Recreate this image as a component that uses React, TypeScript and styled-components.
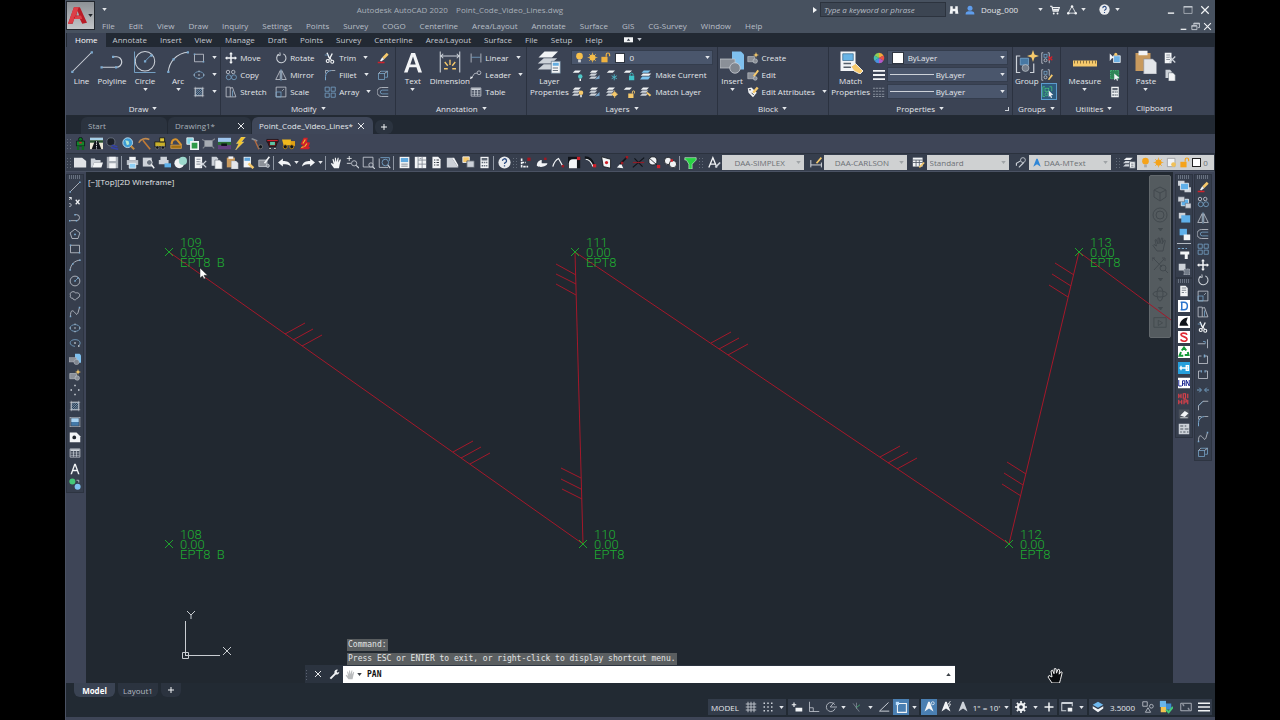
import React from "react";
import styled, { createGlobalStyle, css } from "styled-components";

const g = "#cdd2d9";
const w = "#f2f4f6";
const b = "#7aa9cf";
const y = "#f6c96b";
const r = "#d0202a";
const gr = "#46c878";
const k = "#10141a";

const Global = createGlobalStyle`
  * { box-sizing: border-box; }
  body { margin: 0; background: #000; font-family: "Open Sans", "Noto Sans", sans-serif; font-size: 8px; line-height: 11px; color: #e4e7eb; }
  button, input, select { font: inherit; color: inherit; }
`;

/* ---------- icons (16 x 16 grid) ---------- */

const sheets = (
  <>
    <path d="M4 2h8l-3 3H1z" fill={w} stroke="none" />
    <path d="M3 6h8l-3 3H0z" fill={g} stroke="none" />
    <path d="M3 10h8l-3 3H0z" fill={g} stroke="none" />
  </>
);
const page = <path d="M3 1h7l3 3v11H3z" fill={w} stroke="none" />;
const star = <path d="M12 0l1 3 3 1-3 1-1 3-1-3-3-1 3-1z" fill={y} stroke="none" />;
const lock = (c: string) => (
  <>
    <rect x="2" y="7" width="9" height="8" fill={c} stroke="none" />
    <path d="M9 7V4a2.500 2.500 0 0 1 5 0v2" stroke={c} strokeWidth="1.700" />
  </>
);
const hand = (
  <path
    d="M5 15L1 9.500l1-1 2.500 1.500L3 4l1.200-.5L6 8V2h1.300l.6 5.500L9.500 2l1.300.3L10 8l2.300-4 1.100.6L12 10l-1 5z"
    stroke="none"
  />
);

const icons: Record<string, React.ReactNode> = {
  line: <><path d="M1.500 14.500l13-13" /><path d="M.5 13.500h2v2h-2zM13.500.5h2v2h-2z" fill={b} stroke="none" /></>,
  polyline: <><path d="M2 11.500h8a4 4 0 0 0 0-8H8" /><path d="M0 10.500h2v2H0zM9 10.500h2v2H9zM7 2.500h2v2H7z" fill={b} stroke="none" /></>,
  polylineBig: <><path d="M1 11.500h10a3.500 3.500 0 0 0 0-7H9" strokeWidth=".8" /><path d="M.3 10.800h1.500v1.500H.3zM10 10.800h1.500v1.500H10zM8 3.800h1.500v1.500H8z" fill={b} stroke="none" /></>,
  lineBig: <><path d="M1.500 14.500l13-13" strokeWidth=".7" /><path d="M.8 13.800h1.500v1.500H.8zM13.800.8h1.500v1.500h-1.500z" fill={b} stroke="none" /></>,
  arcBig: <><path d="M1.500 15C2 8 7 2 15 1.500" strokeWidth=".7" /><path d="M.8 13.800h1.500v1.500H.8zM4.300 5.500h1.500V7H4.300zM13.800.8h1.500v1.500h-1.500z" fill={b} stroke="none" /></>,
  circle: <><circle cx="8" cy="8" r="6.500" /><path d="M8 8l4-4" stroke={b} /><path d="M7 7h2v2H7zM11 3h2v2h-2z" fill={b} stroke="none" /></>,
  circleBig: <><circle cx="8" cy="7.500" r="6.500" strokeWidth=".7" /><path d="M8 7.500l4-4M1 1v14h14" stroke={b} strokeWidth=".6" /><path d="M7.300 6.800h1.500v1.500H7.300zM11.500 3h1.500v1.500h-1.500z" fill={b} stroke="none" /></>,
  arc: <><path d="M1.500 15C2 8 7 2 15 1.500" /><path d="M.5 13.500h2v2h-2zM4 5.500h2v2H4zM13.500.5h2v2h-2z" fill={b} stroke="none" /></>,
  rect: <><path d="M2 3h12v10H2z" /><path d="M1 2h2v2H1zM13 12h2v2h-2z" fill={b} stroke="none" /></>,
  ellipse: <><ellipse cx="8" cy="8" rx="6.500" ry="4.500" stroke={b} /><circle cx="8" cy="8" r="1" fill={g} stroke="none" /><path d="M7.300 2.800h1.500M.8 8h1.500M13.700 8h1.500M7.300 13h1.500" stroke={w} /></>,
  hatch: <><path d="M3 3h10v10H3z" stroke={g} /><path d="M3 7l4-4M3 10l7-7M3 13L13 3M6 13l7-7M9 13l4-4" stroke={b} /><path d="M1 3h14M1 13h14M3 1v14M13 1v14" strokeWidth=".7" /></>,
  gradient: <><path d="M3 3h10v5H3z" fill="#a9d3f2" stroke="none" /><path d="M3 8h10v5H3z" fill="#4379a8" stroke="none" /><path d="M1.500 1.500v13M14.500 1.500v13M1 2h14M1 14h14" strokeWidth=".7" /></>,
  move: <path d="M8 0l2.500 3H9v4h4V5.500L16 8l-3 2.500V9H9v4h1.500L8 16l-2.500-3H7V9H3v1.500L0 8l3-2.500V7h4V3H5.500z" fill={w} stroke="none" />,
  rotate: <><path d="M5 3a6.200 6.200 0 1 0 6-.5" strokeWidth="1.400" /><path d="M6.500.5l.5 4-4-.5" strokeWidth="1.200" /></>,
  trim: <><path d="M7 8L4 1M8 8l3-6" stroke={w} strokeWidth="1.800" /><path d="M1 4h5" stroke={b} /><circle cx="5" cy="12" r="2" stroke={w} strokeWidth="1.500" /><circle cx="11" cy="13" r="2" stroke={w} strokeWidth="1.500" /><path d="M8 8l-2 3M8 8l2 3" stroke={w} strokeWidth="1.500" /></>,
  copy: <><circle cx="4" cy="4" r="2.300" /><circle cx="11" cy="4" r="2.300" /><circle cx="5" cy="11" r="3.300" stroke={b} /><circle cx="12" cy="11" r="3.300" stroke={b} /></>,
  mirror: <><path d="M7 2v12H1zM9 2v12h6z" /><path d="M8 0v16" stroke={b} strokeWidth=".8" /></>,
  fillet: <><path d="M2 15V10a8 8 0 0 1 8-8" stroke={b} strokeWidth="1.300" /><path d="M2 6V2h4M10 2h5" strokeWidth=".9" /></>,
  stretch: <><path d="M1.500 1.500H7V14.500H1.500zM7 3l3-1 4.500 12.500H7" /><path d="M10 6v8" stroke={b} /></>,
  scale: <><path d="M1.500 1.500h13v13h-13z" /><path d="M1.500 8H8v6.500H1.500z" stroke={b} /><path d="M9 7l3-3" strokeWidth=".8" /></>,
  array: <><path d="M1.500 1.500H7V7H1.500zM9.500 1.500H15V7H9.500z" stroke={b} /><path d="M1.500 9.500H7V15H1.500zM9.500 9.500H15V15H9.500z" stroke={b} /></>,
  erase: <><path d="M7 7l6-6 2.500 2.500-6 6z" fill={y} stroke="none" /><path d="M7 7L4 11.500l1.500 1L9.500 9.500z" fill={w} stroke="none" /><path d="M1 14h9" stroke={r} strokeWidth="2" /></>,
  explode: <><path d="M2 6h8v8H2zM5 3h9v8h-3" stroke={b} /><path d="M2 6l3-3M10 6l4-3" /></>,
  offset: <><path d="M15 2H6a5.500 5.500 0 0 0 0 12h9" /><path d="M15 5.500H7a2.500 2.500 0 0 0 0 5h8" stroke={b} /></>,
  textA: <path d="M2 15L7 1h2l5 14h-2l-1.300-4H5.300L4 15zM6 9h4L8 3.500z" fill={w} stroke="none" />,
  textBig: <path d="M2 15L6.800 2h2.600L14 15h-2.500l-1.200-3.500H5.600L4.400 15zM6.200 9.600h3.600L8 4.300z" fill={w} stroke="none" />,
  dimension: <><path d="M1.500 1v14M14.500 1v14M2 4h12M3.500 2.500L2 4l1.500 1.500M12.500 2.500L14 4l-1.500 1.500" strokeWidth=".7" /><path d="M8 6.500v3.500M4.500 8l2 2.500M11.500 8l-2 2.500M4 12.500h2.500M9.500 12.500H12" stroke={y} strokeWidth=".9" /></>,
  linear: <><path d="M1.500 2v12M14.500 2v12" /><path d="M2 7h12" stroke={b} /></>,
  leader: <><circle cx="12" cy="5" r="2.500" /><path d="M9.500 5.500L6 6l-4 6" /><path d="M0 13.500l1-4 3 2z" fill={w} stroke="none" /></>,
  table: <><path d="M1.500 2.500h13v11h-13z" /><path d="M2 3h12v2.500H2z" fill={g} stroke="none" /><path d="M2 8h12M2 11h12M6 5v8M10 5v8" strokeWidth=".9" /></>,
  layerProps: <><path d="M5 1h9l-4 4H1z" fill={w} stroke="none" /><path d="M4.500 5.500h9l-4 3.500h-9z" fill={g} stroke="none" /><path d="M4.500 9.500h9l-4 3.500h-9z" fill={g} stroke="none" /><path d="M9.500 7.500h6v8h-6z" fill={w} stroke="#60788e" strokeWidth=".5" /><path d="M10.500 8.500h4v2h-4z" fill="#62ace0" stroke="none" /><path d="M10.500 12h3.500M10.500 13.700h3.500" strokeWidth=".7" stroke="#68727e" /></>,
  layOff: <><path d="M4 2h8l-3 3H1z" fill={w} stroke="none" /><circle cx="11" cy="10" r="3" fill="#4fc6c6" stroke="none" /><path d="M11 13v3" stroke={w} strokeWidth="2" /></>,
  layIso: <>{sheets}<path d="M8 14l6-6v5z" fill={b} stroke="none" /></>,
  layFreeze: <><path d="M4 2h8l-3 3H1z" fill={w} stroke="none" /><path d="M11 7v8M7.500 9l7 4M14.500 9l-7 4" stroke="#4fb6c6" strokeWidth="1.200" /></>,
  layLock: <><path d="M4 2h8l-3 3H1z" fill={w} stroke="none" /><path d="M8 9h7v6H8z" fill="#3fc3c9" stroke="none" /><path d="M9.500 9V7.500a2 2 0 0 1 4 0V9" stroke="#3fc3c9" strokeWidth="1.200" /></>,
  makeCurrent: <><path d="M5 2h9l-3 3H2z" fill="#7cc4ee" stroke="none" /><path d="M4 6h11l-3 3H1z" fill={w} stroke="none" /><path d="M3 10h11l-3 4H0z" fill="#7cc4ee" stroke="none" /></>,
  layOn: <>{sheets}<circle cx="12" cy="9" r="3" fill={y} stroke="none" /><path d="M12 12v3" stroke={w} strokeWidth="2" /></>,
  layThaw: <>{sheets}<circle cx="11.500" cy="11" r="3" fill={y} stroke="none" /><path d="M11.500 6v10M6.500 11h9.500" stroke={y} /></>,
  layUnlock: <><path d="M4 2h8l-3 3H1z" fill={w} stroke="none" /><path d="M7 10h7v6H7z" fill={y} stroke="none" /><path d="M12.500 10V8a1.500 1.500 0 0 1 3 0v2" stroke={y} strokeWidth="1.200" /></>,
  layMatch: <>{sheets}<path d="M8 9l5 5 2-2-5-4z" fill={y} stroke="none" /></>,
  bulb: <><circle cx="8" cy="6" r="4.800" fill="#f7c04c" stroke="none" /><path d="M6 11h4v4H6z" fill={g} stroke="none" /></>,
  sun: <><circle cx="8" cy="8" r="4.500" fill="#f5bd4a" stroke="none" /><path d="M8 1v14M1 8h14M3 3l10 10M13 3L3 13" stroke="#f5bd4a" /></>,
  unlock: lock("#f0b340"),
  bulbDeep: <><circle cx="8" cy="6" r="4.800" fill="#f5a31a" stroke="none" /><path d="M6 11h4v4H6z" fill="#a8aaac" stroke="none" /></>,
  sunDeep: <><circle cx="8" cy="8" r="4.500" fill="#f5a31a" stroke="none" /><path d="M8 1v14M1 8h14M3 3l10 10M13 3L3 13" stroke="#f5a31a" /></>,
  unlockDeep: lock("#f5a31a"),
  sheetSun: <><path d="M2 2h11v12H2z" fill={w} stroke="#8d8f92" /><circle cx="11" cy="11" r="3.500" fill="#f0c15a" stroke="none" /></>,
  insert: <><path d="M8 1h6l2 2v10H8z" fill="#7fc0ee" stroke="none" /><path d="M0 6h10v6H0z" fill="#8b9098" stroke="#c1c5cb" strokeWidth=".5" /><circle cx="10" cy="12" r="3.500" fill="#80868f" stroke={g} strokeWidth=".5" /></>,
  create: <><path d="M1 6h9v7H1z" fill="#8b9098" stroke={g} strokeWidth=".7" /><circle cx="11" cy="12" r="3" fill="#8b9098" stroke={g} strokeWidth=".7" />{star}</>,
  editBlk: <><path d="M1 5h9v8H1z" fill="#8b9098" stroke={g} strokeWidth=".7" /><path d="M8 9l6-8 2 1.500-6 8z" fill={y} stroke="none" /><circle cx="11" cy="12.500" r="2.500" fill="#8b9098" stroke={g} strokeWidth=".7" /></>,
  attrs: <><path d="M1 3l5-1 7 7-5 6-6-6z" fill={w} stroke="none" /><path d="M7 8l6-7 2.500 2-6 7z" fill={y} stroke="none" /><circle cx="4" cy="5" r="1" fill={k} stroke="none" /><path d="M6 9l3 3" stroke={k} /></>,
  match: <><path d="M1 1h10v13H1z" fill={w} stroke="none" /><path d="M2.500 2.500h7v4.500h-7z" fill="#68b4e6" stroke="#3f6d8f" strokeWidth=".5" /><path d="M3 9h5M3 11.500h5" stroke="#555e69" strokeWidth="1" /><path d="M8 11l3-2 5 5-2 2-4-2z" fill={y} stroke={w} strokeWidth=".6" /></>,
  wheel: <><path d="M8 8V1a7 7 0 0 1 6 3.500z" fill="#f3a93b" stroke="none" /><path d="M8 8l6-3.500a7 7 0 0 1 0 7z" fill="#e85048" stroke="none" /><path d="M8 8l6 3.500A7 7 0 0 1 8 15z" fill="#b45ac8" stroke="none" /><path d="M8 8v7a7 7 0 0 1-6-3.500z" fill="#4a8fe0" stroke="none" /><path d="M8 8l-6 3.500a7 7 0 0 1 0-7z" fill="#45c0b0" stroke="none" /><path d="M8 8L2 4.500A7 7 0 0 1 8 1z" fill="#8fce55" stroke="none" /></>,
  weight: <path d="M0 2.500h16M0 8h16M0 13.500h16" stroke={w} strokeWidth="2.600" />,
  ltype: <path d="M0 3h16M0 7h16M0 11h16M0 14h16" stroke="#848c98" strokeWidth="1.600" strokeDasharray="3 1" />,
  group: <><path d="M3.500 4H1v11h2.500M10 15h2.500V9" strokeWidth=".8" /><path d="M3.500 5.500H9V10H3.500z" fill="#4778a3" stroke={b} strokeWidth=".5" /><circle cx="7" cy="12" r="2.300" fill="#747d89" stroke={g} strokeWidth=".4" />{star}</>,
  ungroup: <><path d="M3 1H1v14h2M9 1h2v14" /><rect x="4" y="3" width="4" height="4" stroke={b} /><circle cx="6" cy="11" r="2" /><path d="M10 6l5 5M15 6l-5 5" stroke={r} strokeWidth="1.800" /></>,
  groupEdit: <><path d="M3 1H1v14h2M9 1h2v8" /><rect x="4" y="3" width="4" height="4" stroke={b} /><circle cx="6" cy="11" r="2" /><path d="M9 14l5-7 2 1.500-5 6z" fill={y} stroke="none" /></>,
  groupSel: <><path d="M4 1H1v13h3M10 1h3v6" stroke={gr} /><rect x="4" y="3" width="5" height="4" stroke={gr} /><circle cx="6" cy="11" r="2" stroke={gr} /><path d="M9 6l6 6-3 .3 1.500 3-1.500.7-1.300-3L9 15z" fill={w} stroke="none" /></>,
  measure: <><path d="M-1 7h18v4H-1z" fill={y} stroke="none" /><path d="M1 7v2M3 7v2M5 7v2M7 7v2M9 7v2M11 7v2M13 7v2M15 7v2" stroke="#6d5830" strokeWidth=".5" /></>,
  quickSel: <><path d="M6 5h9v9H6z" fill="#6db1e4" stroke={w} /><path d="M1 2l6 6-3 .3L1 12z" fill={w} stroke="none" /><circle cx="9" cy="3" r="2" fill={y} stroke="none" /></>,
  selAll: <><path d="M2 2h11v11H2z" fill="#2f8657" stroke={gr} strokeDasharray="2 1" /><path d="M7 6l7 6-3 .3 1 3-1.500.5-1-3L7 15z" fill={w} stroke="none" /></>,
  calc: <><path d="M3 1h10v14H3z" fill={w} stroke="none" /><path d="M4.500 2.500h7v3h-7zM4.500 7h2v2h-2zM7.500 7h1.500v2H7.500zM10 7h1.500v2H10zM4.500 11h2v2h-2zM7.500 11h1.500v2H7.500zM10 11h1.500v2H10z" fill="#5d6673" stroke="none" /></>,
  paste: <><path d="M1 2h10v12H1z" fill="#c89a5e" stroke="none" /><path d="M3 .5h6v3H3z" fill={w} stroke="none" /><path d="M6.500 6h6L15 8.500V16H6.500z" fill="#e3e6ea" stroke="#8a8f98" strokeWidth=".4" /></>,
  cut: <><path d="M1 1h9v14H1z" fill={w} stroke="none" /><path d="M3 4h5M3 7h5M3 10h5" stroke="#6b7480" /><path d="M7 6l8 8M15 6l-8 8" stroke={g} strokeWidth="1.700" /></>,
  copyClip: <><path d="M2 1h6l2 2v9H2z" fill={g} stroke="none" /><path d="M6 5h6l3 3v8H6z" fill={w} stroke="#5b6370" strokeWidth=".7" /></>,
  open: <><path d="M1 3h5l1 2h6v3H5l-2 6H1z" fill={g} stroke="none" /><path d="M5 8h11l-2 6H3z" fill={w} stroke="none" /></>,
  newDoc: <path d="M0 2h10l5 4v8H0z" fill="#dfe2e6" stroke="none" />,
  save: <><path d="M1 1h14v14H1z" fill="#a9afb7" stroke="none" /><path d="M4 1h8v5H4zM4 9h8v6H4z" fill={w} stroke="none" /></>,
  print: <><path d="M4 1h8v4H4z" fill={w} stroke="none" /><path d="M1 5h14v6H1z" fill="#bcc2ca" stroke="none" /><path d="M4 9h8v6H4z" fill="#8fd0f6" stroke={w} /></>,
  preview: <><path d="M1 2h11v11H1z" fill={g} stroke="none" /><circle cx="9" cy="8" r="3.500" fill="#67707c" stroke={w} /><path d="M11.500 10.500L15 15" stroke={w} strokeWidth="1.800" /></>,
  publish: <><path d="M3 1h8v4H3zM1 5h12v5H1z" fill={g} stroke="none" /><path d="M8 9h8v5H8z" fill="#5db0ea" stroke="none" /></>,
  dwf: <><circle cx="6.500" cy="9" r="6" fill={w} stroke="none" /><circle cx="11" cy="6" r="5" fill="#9dd9cd" stroke="none" /></>,
  matchSmall: <><path d="M2 1h9v13H2z" fill={w} stroke="none" /><path d="M3 2h7v4H3z" fill="#5fa6dc" stroke="none" /><path d="M8 9l6 6" stroke={y} strokeWidth="3" /></>,
  blockEd: <><path d="M1 5h10v8H1z" fill="#8b9098" stroke={g} /><path d="M8 9l6-8" stroke={w} strokeWidth="2" /><circle cx="12" cy="12" r="2" fill="#8b9098" stroke={g} /></>,
  undo: <path d="M0 8l6-5v3c5 0 9 1 10 7-3-3-6-3-10-3v3z" fill={w} stroke="none" />,
  redo: <path d="M16 8l-6-5v3C5 6 1 7 0 13c3-3 6-3 10-3v3z" fill={w} stroke="none" />,
  hand: <g fill={w}>{hand}</g>,
  handDim: <g fill="#b9bbbd">{hand}</g>,
  zoomRt: <><path d="M1 3h6M4 0v6M1 9h5" stroke={w} /><circle cx="10" cy="9" r="3.200" /><path d="M12.500 11.500L16 15" strokeWidth="1.500" /></>,
  zoomWin: <><path d="M1.500 1.500h12v12h-12z" /><circle cx="11" cy="11" r="2.600" fill="#3b4354" /><path d="M13 13l3 3" strokeWidth="1.500" /></>,
  zoomPrev: <><path d="M1.500 3v11h11" /><circle cx="9" cy="8" r="4" stroke={b} /><path d="M3 2h11v4" stroke={b} /><path d="M12 11l3 4" strokeWidth="1.500" /></>,
  propPal: <><path d="M2 1h12v14H2z" fill={w} stroke="none" /><path d="M3.500 2.500h9v5h-9z" fill="#5fa9df" stroke="none" /><path d="M4 10h8M4 12.500h8" stroke="#6b7480" /></>,
  grid4: <><path d="M1 1h14v14H1z" fill={w} stroke="none" /><path d="M5 1v14M10 1v14M5 5h10M5 10h10M7 3h2" stroke="#7b838f" /></>,
  tools: <>{page}<path d="M5 5h1.500M8 5h3M5 8h1.500M8 8h3M5 11h1.500M8 11h3" stroke="#303741" strokeWidth="1.300" /></>,
  markup: <><path d="M1 2h6l8 12H1z" fill={g} stroke="none" /><path d="M7 2h3l5 9v3z" fill={w} stroke="none" /></>,
  sheetset: <><path d="M1 1h8v7H1z" fill={y} stroke={w} /><path d="M6 6h9v8H6z" fill={g} stroke="#4f5763" /></>,
  help: <><circle cx="8" cy="8" r="7.500" fill="#e9ebee" stroke="none" /><path d="M5.500 6a2.500 2.500 0 1 1 3.500 2.200c-.8.4-1 .8-1 1.600M8 11.500v1.500" stroke="#2a4a80" strokeWidth="1.600" /></>,
  node1: <><path d="M2 3v10h8M2 8h5" stroke={w} strokeWidth="2" strokeDasharray="3 1" /><path d="M9 2h4v4H9z" fill="#a01822" stroke="none" /></>,
  node2: <><path d="M1 12c0-5 4-7 6-7v4h7c0 4-9 6-13 3z" fill={w} stroke="none" /><path d="M10 2h3v3h-3z" fill="#a01822" stroke="none" /></>,
  node3: <><path d="M1 13C3 6 6 4 8 3l5 9" stroke={w} strokeWidth="1.500" /><path d="M12 11h3v3h-3z" fill="#a01822" stroke="none" /></>,
  node4: <><path d="M0 1h15v14H0z" fill={k} stroke="none" /><path d="M1 15V9c0-3 2-5 5-5h5v11z" fill={w} stroke="none" /><path d="M11 1h4v4h-4z" fill={r} stroke="none" /></>,
  node5: <><path d="M1 2c6 0 9 3 11 10" stroke={k} strokeWidth="3.500" /><path d="M2 4c4 0 7 3 9 9" stroke={w} strokeWidth="1.500" /><path d="M11 10h4v4h-4z" fill={r} stroke="none" /></>,
  node6: <><path d="M2 1l11 3v11L4 13z" fill={w} stroke={k} /><circle cx="8" cy="8" r="2" fill={r} stroke="none" /></>,
  node7: <><path d="M1 14l5-5 3 6z" fill={w} stroke="none" /><path d="M5 10l8-8" stroke={k} strokeWidth="2" /><path d="M12 0h3v3h-3zM6 7h3v3H6z" fill="#a01822" stroke="none" /></>,
  node8: <><path d="M1 14L15 2M3 3l10 10" stroke={k} strokeWidth="1.500" /><path d="M1 8h14" stroke="#8f1d28" strokeWidth="1.500" /></>,
  node9: <><circle cx="6" cy="6" r="5" fill={w} stroke={k} /><path d="M2 3l10 9" stroke={k} /><path d="M11 11h4v4h-4z" fill={r} stroke="none" /></>,
  node10: <><circle cx="5" cy="6" r="4.500" fill={w} stroke={k} /><circle cx="11" cy="10" r="4.500" fill={w} stroke={k} /><path d="M8 4h3v3H8z" fill={r} stroke="none" /></>,
  filter: <path d="M1 2h14v3l-5 5v6H6v-6L3 5H1z" fill="#27d243" stroke="#d9f7dd" strokeWidth=".7" />,
  textStyle: <><path d="M1 14L6 2l5 12M3 10h6" stroke={w} strokeWidth="1.600" /><path d="M9 14l6-6" stroke={g} strokeWidth="2" /></>,
  dimStyle: <><path d="M1 5v9M14 8v6M1 11h13" stroke={w} /><path d="M8 9l6-7" stroke={y} strokeWidth="2" /></>,
  tableStyle: <><path d="M1 2h12v11H1z" fill={w} stroke="none" /><path d="M1 5h12M1 8h12M5 5v8M9 5v8" stroke="#4e5663" /><path d="M9 14l6-6" stroke={y} strokeWidth="2" /></>,
  leadStyle: <><circle cx="11" cy="5" r="3" /><path d="M8 6L3 9v3M6 14l6-6" strokeWidth="1.400" /></>,
  mtext: <path d="M7 1h2l5 13-6-4-6 4z" fill="#2f86d6" stroke="none" />,
  layTool: <>{sheets}<path d="M8 7h7v8H8z" fill={w} stroke="#535b68" /><path d="M10 10h3M10 12.500h3" stroke="#535b68" /></>,
  man: <><circle cx="8" cy="3" r="2.500" fill="#0b7a1f" stroke={k} /><path d="M3 5h10v6H3z" fill="#12862a" stroke={k} /><path d="M5 11v5M11 11v5" stroke="#0e6a20" strokeWidth="3" /><path d="M6.500 6h3v2h-3z" fill={r} stroke="none" /></>,
  road: <><path d="M0 1h16v14H0z" fill="#ece8d6" stroke="none" /><path d="M0 1h16v3H0z" fill="#a7cfe8" stroke="none" /><path d="M0 4h16v3H0z" fill="#27502f" stroke="none" /><path d="M6 5h4l4 10H2z" fill={k} stroke="none" /><path d="M8 5v10" stroke={w} strokeDasharray="2 1" /></>,
  hydro: <><circle cx="6" cy="6" r="5" fill="#1c2129" stroke="#6f7885" /><path d="M7 10l7 2M6 13l9 2" stroke="#3342a8" strokeWidth="1.800" /></>,
  globe: <><circle cx="7" cy="7" r="6" fill="#3c9bd4" stroke="#cfe9f8" /><path d="M4 4l4 1 1 4-3 1z" fill="#b4e7d2" stroke="none" /><path d="M11 11l4 4" stroke="#c28a3e" strokeWidth="2.500" /></>,
  pick: <><path d="M1 7c2-5 8-6 13-4" stroke="#c28a4e" strokeWidth="2" /><path d="M6 4l9 11" stroke="#c27a35" strokeWidth="2" /></>,
  train: <><path d="M1 6h13v6H1z" fill="#c9b02a" stroke={k} /><path d="M7 1h6v5H7z" fill="#e0c73a" stroke={k} /><circle cx="4" cy="13" r="2" fill={k} stroke="#999" strokeWidth=".6" /><circle cx="11" cy="13" r="2" fill={k} stroke="#999" strokeWidth=".6" /></>,
  dozer: <><path d="M2 9c0-6 5-8 8-4l4 5" stroke="#d8942e" strokeWidth="2.500" /><path d="M1 10h13v4H1z" fill="#a06d12" stroke="#d8a04e" /></>,
  docs: <><path d="M1 1h8v8H1z" fill="#7fd6e6" stroke={w} /><path d="M6 6h9v9H6z" fill="#2f9a48" stroke={w} strokeWidth="2" /></>,
  tank: <><path d="M3 4h10v8H3z" fill="#a8adb4" stroke="none" /><path d="M0 3l4 2M16 2l-4 3M1 14l3-3M15 14l-3-3" stroke="#80868f" strokeWidth="1.500" /></>,
  pic: <><path d="M0 1h16v6H0z" fill="#9fc6ee" stroke="none" /><path d="M0 6h16v4H0z" fill="#2b7034" stroke="none" /><path d="M0 10h16v5H0z" fill="#63407f" stroke="none" /><path d="M4 8h7v3H4z" fill={k} stroke="none" /></>,
  bolt: <path d="M9 0h5L9 6h3L2 16l4-8H3z" fill="#f3c329" stroke="#f4e3a0" strokeWidth=".5" />,
  hammer: <><path d="M2 2l7 3" stroke="#8a9099" strokeWidth="2" /><path d="M6 4l5 11" stroke="#b66c40" strokeWidth="1.700" /><circle cx="13" cy="12" r="2.500" fill={k} stroke="#777" /></>,
  cart: <><path d="M1 3h14v3H1z" fill={r} stroke={k} /><path d="M2 6h12l-2 6H4z" fill="#5f1717" stroke={k} /><path d="M5 6h6v4H5z" fill="#5ec4a4" stroke="none" /><circle cx="5" cy="14" r="1.500" fill={w} stroke={k} /><circle cx="11" cy="14" r="1.500" fill={w} stroke={k} /></>,
  truck: <><path d="M0 3h11v7H2z" fill="#f1b91d" stroke="none" /><path d="M11 5h5v6h-5z" fill="#e0a014" stroke="none" /><circle cx="4" cy="12" r="2.500" fill={k} stroke="#c88e14" /><circle cx="12" cy="12" r="2.500" fill={k} stroke="#c88e14" /></>,
  logoR: <><path d="M7 1h5l-1 5 4 1-2 5 2 1-2 2H2l4-5-3-1z" fill={r} stroke="none" /><path d="M6 8l3-5M8 12l3-4M4 13l3-1" stroke="#f1c332" strokeWidth="1.400" /></>,
  flyout: <><path d="M-2 7L3 2M0 2h3v3" stroke={w} strokeWidth="1.200" /><circle cx="1" cy="12" r="2" /><path d="M9 5l5 6M14 5l-5 6" stroke={w} strokeWidth="1.600" /></>,
  polygon: <><path d="M8 1.500l6.500 5L12 14H4L1.500 6.500z" /><circle cx="8" cy="8.500" r="1.300" fill={b} stroke="none" /></>,
  cloud: <path d="M3 3c3-2 5 0 6 1 3-1 6 1 5 4s-3 2-4 4-5 1-5-1c-3 0-4-2-3-4-1-2 0-3 1-4z" />,
  spline: <><path d="M2 14c0-6 1-9 4-7s4 7 6 2l2-7" /><path d="M1 13h2v2H1zM13 1h2v2h-2z" fill={b} stroke="none" /></>,
  ellArc: <><path d="M8 12.500c-9-1-8-9 0-9s8 6 5 8" stroke={b} /><path d="M7 7h2v2H7zM12 11h2v2h-2z" fill={g} stroke="none" /></>,
  points: <path d="M7 1h2v2H7zM2 7h2v2H2zM12 7h2v2h-2zM7 13h2v2H7z" fill={g} stroke="none" />,
  region: <><path d="M1 2h9l5 5v8H1z" fill={w} stroke="none" /><circle cx="7" cy="8.500" r="2.500" fill="#1e242c" stroke="none" /></>,
  colors: <><circle cx="4.500" cy="4.500" r="4" fill={gr} stroke="none" /><circle cx="11.500" cy="11.500" r="4" fill="#7fc0f0" stroke="none" /><path d="M10 3h3v3" /></>,
  orderTop: <><path d="M0 1h8v6H0zM8 9h8v6H8z" fill={g} stroke="none" /><path d="M3 4h10v8H3z" fill="#5fb0ea" stroke={w} /></>,
  orderBack: <><path d="M4 4h9v8H4z" fill="#5fb0ea" stroke={w} /><path d="M0 1h8v6H0zM9 9h7v6H9z" fill={g} stroke="#4d5563" strokeWidth=".6" /></>,
  orderUp: <><path d="M1 1h8v7H1z" fill={g} stroke="none" /><path d="M4 4h11v9H4z" fill="#5fb0ea" stroke="none" /></>,
  orderDown: <><path d="M2 1h9v8H2z" fill="#5fb0ea" stroke="none" /><path d="M7 8h8v7H7z" fill={w} stroke="none" /></>,
  textFront: <><path d="M0 2h3M5 2h3M10 2h2" stroke={b} strokeWidth="1.500" /><path d="M3 6h12v4h-2v6H9v-6H3z" fill={w} stroke="none" /></>,
  hatchBack: <><path d="M1 1h9v9H1z" fill={g} stroke="none" /><path d="M8 8h8v8H8z" fill="#727b88" stroke={g} strokeDasharray="1 1" /></>,
  sheetA: <>{page}<path d="M5 4h6M5 7h6M5 10h3M10 10h1" stroke="#59616d" /></>,
  letterD: <><path d="M0 0h16v16H0z" fill="#fff" stroke="none" /><path d="M5 3h3c6 0 6 10 0 10H5zM3.500 3H6M3.500 13H6" stroke="#2a74cc" strokeWidth="2" /></>,
  curve: <><path d="M0 0h16v16H0z" fill="#fff" stroke="none" /><path d="M2 13C3 6 7 3 13 2l-2 6 3 5z" fill={k} stroke="none" /></>,
  letterS: <><path d="M0 0h16v16H0z" fill="#fff" stroke="none" /><path d="M12 5c-1-3-8-3-8 0s8 2 8 6-8 3-8 0" stroke="#e02a35" strokeWidth="2.200" /></>,
  recycle: <><path d="M0 0h16v16H0z" fill="#fff" stroke="none" /><path d="M5 6l3-4 3 4M13 8l1 4H9M7 13H2l2-5" stroke="#159a3a" strokeWidth="2.600" /></>,
  blue: <><path d="M0 0h16v16H0z" fill="#27a0dc" stroke="none" /><path d="M2 8h12M4 5v6M11 5h3v6h-3z" stroke="#fff" strokeWidth="1.800" /></>,
  lan: <><path d="M-1 1h18v14H-1z" fill="#fff" stroke="none" /><path d="M1 4v8h4M6 12V5h3v7M6 9h3M11 12V4l4 8V4" stroke="#1a2590" strokeWidth="1.300" /></>,
  redGrid: <><path d="M1 1v6M4 1v6M1 4h3M7 1v6h3V1zM13 1v6M1 9v6M1 12h4V9v6M8 15V9h3v3H8M13 9v6" stroke="#d9404a" strokeWidth="1.600" /></>,
  clipEdit: <><path d="M1 2h14v12H1z" fill="#4c525c" stroke="none" /><path d="M3 10l6-6 5 3-5 5z" fill={w} stroke="none" /><path d="M3 13h10" stroke={w} /></>,
  rows: <><path d="M1 1h14v14H1z" fill={g} stroke="none" /><path d="M3 4h4M9 4h2M3 8h4M9 8h5M3 12h2M7 12h3M12 12h2" stroke="#4b535f" strokeWidth="1.600" /></>,
  extend: <><path d="M1 9h10M14 3v12" /><path d="M8 6h3v3" stroke={b} /></>,
  breakAt: <><path d="M2 4v10h12V4M2 4h4M10 4h4" /><path d="M9 2h2v4H9z" fill={b} stroke="none" /></>,
  breakG: <><path d="M5 4H2v10h12V4h-3" /><path d="M5 3h1.500v3H5zM10 3h1.500v3H10z" fill={b} stroke="none" /></>,
  join: <path d="M0 8h5M3 5l3 3-3 3M16 8h-5M13 5l-3 3 3 3" stroke={b} strokeWidth="1.200" />,
  chamfer: <><path d="M2 15V9l6-6h7" /><path d="M2 9l6-6" stroke={b} /></>,
  binoc: <path d="M2 2h4v4h4V2h4v5l1 7h-5v-4H6v4H1l1-7z" fill={w} stroke="none" />,
  user: <><circle cx="8" cy="5" r="4" fill="#5f9dec" stroke="none" /><path d="M1 15c0-5 3-5 7-5s7 0 7 5z" fill="#5f9dec" stroke="none" /></>,
  shop: <><path d="M0 2h3l2 8h8l2-6H4" stroke={w} strokeWidth="1.700" /><path d="M5 6h9l-1 3H5z" fill={w} stroke="none" /><circle cx="6" cy="13.500" r="1.500" fill={w} stroke="none" /><circle cx="12" cy="13.500" r="1.500" fill={w} stroke="none" /></>,
  a360: <><path d="M8 2l6 11H2z" stroke={w} strokeWidth="1.300" /><circle cx="8" cy="2.500" r="2" fill={w} stroke="none" /><circle cx="2" cy="13" r="2" fill={w} stroke="none" /><circle cx="14" cy="13" r="2" fill={w} stroke="none" /></>,
  min: <path d="M3 13h10" stroke={w} strokeWidth="2.200" />,
  max: <><path d="M1.500 2.500h13v11h-13z" /><path d="M1 3h14" strokeWidth="2" /></>,
  restore: <><path d="M5 5V2h10v8h-3M1.500 6.500h9v7h-9z" strokeWidth="1.500" /><path d="M5 3h10M1 7h9" strokeWidth="2" /></>,
  close: <path d="M2 2l12 12M14 2L2 14" stroke={w} strokeWidth="1.900" />,
  plus: <path d="M8 2v12M2 8h12" stroke={w} strokeWidth="2" />,
  wrenchFull: <><path d="M2 14l8-8" stroke={w} strokeWidth="2.800" /><path d="M8 6a4 4 0 0 1 5-5l-2 3 1.500 1.500L15 4a4 4 0 0 1-5 4z" fill={w} stroke="none" /></>,
  camera: <><path d="M0 4h16v9H0z" fill={w} stroke="none" /><path d="M8 6l3 4H5z" fill="#303844" stroke="none" /></>,
  gridS: <path d="M4 1v14M8 1v14M12 1v14M1 4h14M1 8h14M1 12h14" strokeWidth="1.100" />,
  snap: <path d="M2 2h2v2H2zM7 2h2v2H7zM12 2h2v2h-2zM2 7h2v2H2zM7 7h2v2H7zM12 7h2v2h-2zM2 12h2v2H2zM7 12h2v2H7zM12 12h2v2h-2z" fill={g} stroke="none" />,
  infer: <><path d="M1 5h6M4 2v6" stroke={w} strokeWidth="1.500" /><path d="M6 9h9v5H6z" fill={w} stroke="none" /></>,
  ortho: <path d="M2 1v13h13M2 9h5v5" />,
  polar: <><path d="M13 5a6 6 0 1 0 .5 5M7 8h9M7 8l5-6" /></>,
  iso: <><path d="M3 2l9 12M8 1v9" stroke="#8f98a5" /><path d="M8 8l5-4" stroke={gr} /></>,
  otrack: <path d="M14 2L2 13.500h13" stroke={g} strokeWidth="1.300" />,
  osnap: <><path d="M3 3h11v11H3z" stroke={w} strokeWidth="1.300" /><path d="M1 1h4v4H1z" fill="#bfe0ff" stroke="none" /></>,
  anno1: <><path d="M7 1h2l5 13-6-4-6 4z" fill={w} stroke="none" /><circle cx="13" cy="3" r="2" stroke={w} /></>,
  anno2: <><path d="M7 1h2l5 13-6-4-6 4z" fill={w} stroke="none" /><path d="M14 0l-3 4h3l-2 4" stroke={w} /></>,
  anno3: <path d="M7 1h2l5 13-6-4-6 4z" fill={g} stroke="none" />,
  gear: <><circle cx="8" cy="8" r="4" stroke={w} strokeWidth="3" /><path d="M8 0v3M8 13v3M0 8h3M13 8h3M2.500 2.500l2 2M11.500 11.500l2 2M13.500 2.500l-2 2M2.500 13.500l2-2" stroke={w} strokeWidth="2.200" /></>,
  monitor: <><path d="M1 2h14v5M1 2v11h6" strokeWidth="1.400" /><path d="M1 3h14" strokeWidth="2" /><path d="M9 9h6v5H9z" fill={w} stroke="none" /></>,
  elev: <><path d="M8 1l7 4-7 4-7-4z" fill="#6fb8ee" stroke="none" /><path d="M1 7l7 4 7-4v3l-7 5-7-5z" fill={w} stroke="none" /></>,
  isoObj: <><path d="M1 1h6v6H1z" /><circle cx="12.500" cy="7" r="2.500" /><path d="M8 9l3.500 6h-7z" /></>,
  perf: <><path d="M1 1h7v7H1z" fill="#69b5ea" stroke="none" /><path d="M2 8h6v6H2z" fill="#f3c34e" stroke="none" /><path d="M8 4h6v7H8z" fill="#3f8dcf" stroke="none" /><path d="M8 11l3 3 5-6" stroke={gr} strokeWidth="2.300" /></>,
  clean: <><path d="M1 3h14v10H1z" /><path d="M3 5h2v2M13 11h-2V9" /></>,
  menu: <path d="M0 3h16M0 8h16M0 13h16" stroke={w} strokeWidth="1.800" />,
};

const Svg = styled.svg<{ $s: number }>`
  width: ${(p) => p.$s}px;
  height: ${(p) => p.$s}px;
  flex: none;
  display: block;
  fill: none;
  stroke: ${g};
  stroke-width: 1;
`;
const Icon = ({ n, s = 12 }: { n: string; s?: number }) => (
  <Svg $s={s} viewBox="0 0 16 16" aria-hidden>{icons[n]}</Svg>
);
const CaretSvg = styled.svg`
  width: 5px;
  height: 3px;
  flex: none;
  display: block;
  fill: currentColor;
`;
const Caret = () => <CaretSvg viewBox="0 0 6 4" aria-hidden><path d="M0 0h6L3 4z" /></CaretSvg>;

const bare = css`
  border: 0;
  background: none;
  padding: 0;
  display: flex;
  align-items: center;
  justify-content: center;
  white-space: nowrap;
`;

/* ---------- frame ---------- */

const Frame = styled.div`
  margin: 0 65px;
  min-height: 100vh;
  display: flex;
  flex-direction: column;
  background: #3e4557;
  border-left: 1px solid #4a5263;
`;
const Header = styled.header`
  display: flex;
  height: 33px;
  background: #47515f;
`;
const AppButton = styled.button`
  ${bare}
  width: 29px;
  height: 29px;
  margin-top: 1px;
  gap: 1px;
  background: linear-gradient(#8d9196, #c3c6c9);
  border: 1px solid #23282f;
  color: #22262c;
`;
const HeaderRows = styled.div`
  flex: 1;
  min-width: 0;
`;
const TitleBar = styled.div`
  display: flex;
  align-items: center;
  height: 19px;
  padding: 0 2px 0 5px;
`;
const Title = styled.h1`
  flex: 1;
  margin: 0;
  font-size: 8px;
  font-weight: 400;
  text-align: center;
  color: #a9b0b9;
  white-space: pre;
`;
const Search = styled.input`
  width: 126px;
  height: 15px;
  margin: 0 2px;
  padding: 0 3px;
  border: 1px solid #2c333e;
  background: #3c4552;
  &::placeholder { color: #b7bdc5; font-style: italic; opacity: 1; }
`;
const Tool = styled.button<{ $w?: number; $on?: boolean }>`
  ${bare}
  width: ${(p) => p.$w ?? 16}px;
  height: 16px;
  flex: none;
  ${(p) => p.$on && css`background: #4a7fb2;`}
`;
const UserName = styled.button`
  ${bare}
  width: 55px;
  justify-content: flex-start;
`;
const HelpTools = styled.div`
  display: flex;
  margin-left: 8px;
`;
const WindowButtons = styled.div`
  display: flex;
  margin-left: 41px;
`;
const MenuRow = styled.div`
  display: flex;
  align-items: center;
  justify-content: space-between;
  height: 14px;
  padding-right: 2px;
`;
const MenuBar = styled.nav`
  display: flex;
  height: 14px;
`;
const MenuItem = styled.button`
  ${bare}
  padding: 0 7px;
  height: 13px;
  color: #b9bfc8;
`;
const RibbonTabs = styled(MenuBar)`
  padding: 0 0 0 1px;
  gap: 1px;
  background: #222933;
`;
const RibbonTab = styled(MenuItem)<{ $on?: boolean; $wide?: boolean }>`
  height: 14px;
  padding: 0 ${(p) => (p.$wide ? 14 : 6)}px 1px;
  color: #c3c8d0;
  ${(p) => p.$on && css`background: #3b4354; color: #fff; padding: 0 8px 1px;`}
`;
const Group = styled.div<{ $gap?: number }>`
  display: flex;
  align-items: center;
  gap: ${(p) => p.$gap ?? 0}px;
`;

/* ---------- ribbon ---------- */

const Ribbon = styled.div`
  display: grid;
  grid-template-columns: 155fr 175fr 131fr 190fr 111fr 184fr 48fr 67fr 87fr;
  height: 69px;
  background: #3b4354;
  border-bottom: 1px solid #232a33;
`;
const Panel = styled.section`
  display: flex;
  flex-direction: column;
  min-width: 0;
  border-right: 1px solid #2b3240;
`;
const PanelBody = styled.div<{ $pad?: number }>`
  display: flex;
  height: 54px;
  padding: 2px 0 0 ${(p) => p.$pad ?? 0}px;
`;
const PanelTitle = styled.button`
  ${bare}
  position: relative;
  height: 14px;
  gap: 4px;
`;
const ClipTitle = styled.div`
  height: 14px;
  line-height: 14px;
  padding-left: 8px;
`;
const Launcher = styled.span`
  position: absolute;
  right: 3px;
  bottom: 4px;
  width: 4px;
  height: 4px;
  border-right: 1px solid ${g};
  border-bottom: 1px solid ${g};
`;
const Big = styled.button<{ $w: number }>`
  ${bare}
  flex-direction: column;
  justify-content: flex-start;
  flex: none;
  width: ${(p) => p.$w}px;
  padding-top: 1px;
  line-height: 11px;
  white-space: pre-line;
  & > span { margin: 1px 0 2px; }
`;
const Stack = styled.div<{ $w?: number }>`
  display: flex;
  flex-direction: column;
  flex: ${(p) => (p.$w ? "none" : "1")};
  width: ${(p) => (p.$w ? `${p.$w}px` : "auto")};
  min-width: 0;
`;
const Row = styled.button<{ $on?: boolean }>`
  ${bare}
  justify-content: flex-start;
  height: 17px;
  gap: 3px;
  & > ${CaretSvg} { margin-left: 4px; }
  ${(p) => p.$on && css`width: 16px; padding-left: 1px; background: #2e5b7e; outline: 1px solid #5c9ccc; outline-offset: -1px;`}
`;
const IconRow = styled.div`
  display: flex;
  height: 17px;
  gap: 5px;
  padding-left: 1px;
`;
const Combo = styled.div`
  display: flex;
  align-items: center;
  height: 15px;
  margin: 1px 4px 1px 0;
  padding: 0 2px 0 2px;
  gap: 2px;
  background: #4a566c;
  border: 1px solid #343d4d;
`;
const Select = styled.select<{ $center?: boolean }>`
  appearance: none;
  border: 0;
  background: none;
  padding: 0;
  flex: 1;
  min-width: 0;
  height: 13px;
  line-height: 13px;
  ${(p) => p.$center && css`text-align-last: center;`}
`;
const Swatch = styled.span<{ $s: number }>`
  width: ${(p) => p.$s}px;
  height: ${(p) => p.$s}px;
  margin: 0 2px;
  flex: none;
  background: #fff;
  border: 1px solid #2e3540;
`;
const Rule = styled.span`
  width: 44px;
  height: 1px;
  flex: none;
  background: ${g};
`;

const BigBtn = ({ n, label, w: width, s = 24, caret }: { n: string; label: string; w: number; s?: number; caret?: boolean }) => (
  <Big $w={width}><Icon n={n} s={s} /><span>{label}</span>{caret && <Caret />}</Big>
);
const RowBtn = ({ n, label, caret, name }: { n: string; label?: string; caret?: boolean; name?: string }) => (
  <Row aria-label={label ?? name}><Icon n={n} />{label}{caret && <Caret />}</Row>
);
const Foot = ({ label, launcher }: { label: string; launcher?: boolean }) => (
  <PanelTitle>{label}<Caret />{launcher && <Launcher />}</PanelTitle>
);

/* ---------- tabs and toolbars ---------- */

const DocTabs = styled.nav`
  display: flex;
  align-items: flex-end;
  gap: 1px;
  height: 18px;
  padding-left: 15px;
  background: #222933;
`;
const DocTab = styled.div<{ $w: number; $on?: boolean }>`
  display: flex;
  align-items: center;
  justify-content: space-between;
  width: ${(p) => p.$w}px;
  height: 17px;
  padding: 0 4px 0 7px;
  border-radius: 6px 6px 0 0;
  background: ${(p) => (p.$on ? "#3f4759" : "#2b333f")};
  color: ${(p) => (p.$on ? "#e4e7eb" : "#a9b0b9")};
`;
const TabLabel = styled.button`${bare}`;
const PlusTab = styled.button`
  ${bare}
  width: 18px;
  height: 14px;
  margin-left: 1px;
  border-radius: 6px;
  background: #2b333f;
`;
const Bar = styled.div<{ $line?: boolean }>`
  display: flex;
  align-items: center;
  height: 19px;
  background: ${(p) => (p.$line ? "#363e4d" : "#3e4557")};
  ${(p) => p.$line && css`border: 1px solid #2b323e; border-width: 1px 1px 1px 0; border-bottom-color: #4a5263;`}
`;
const Grip = styled.span<{ $w: number }>`
  width: ${(p) => p.$w}px;
  height: 11px;
  flex: none;
  background: radial-gradient(#7d8694 1px, transparent 1px) 0 0 / 3px 3px;
  background-clip: content-box;
  padding: 0 1px;
  opacity: 0.6;
`;
const Sep = styled.span`
  width: 1px;
  height: 14px;
  margin: 0 2px 0 1px;
  flex: none;
  background: #8e96a2;
`;
const LightCombo = styled.div<{ $grow?: number }>`
  display: flex;
  align-items: center;
  flex: ${(p) => p.$grow ?? 84} 1 0;
  min-width: 0;
  height: 15px;
  margin-right: ${(p) => (p.$grow ? 0 : 4)}px;
  padding: 0 3px;
  gap: 2px;
  background: #cfd1d2;
  color: #6c7075;
  & > ${CaretSvg} { fill: #9fa3a6; }
`;
const LayerSwatch = styled.span`
  width: 9px;
  height: 9px;
  flex: none;
  background: #fff;
  border: 1px solid #222;
`;

/* ---------- work area ---------- */

const Main = styled.main`
  flex: 1;
  display: flex;
  min-height: 400px;
`;
const SideStrip = styled.aside<{ $w: number; $pad?: number }>`
  width: ${(p) => p.$w}px;
  flex: none;
  display: flex;
  gap: 1px;
  padding: 2px 0 0 ${(p) => p.$pad ?? 0}px;
`;
const VCol = styled.div`
  display: flex;
  flex-direction: column;
`;
const VBar = styled.div<{ $h: number }>`
  display: flex;
  flex-direction: column;
  align-items: center;
  width: 18px;
  height: ${(p) => p.$h}px;
  background: #363e4d;
  border: 1px solid #2d3441;
  & > button { flex: 1; min-height: 0; height: auto; }
`;
const VGrip = styled.span`
  width: 12px;
  height: 4px;
  flex: none;
  background: repeating-linear-gradient(90deg, #687180 0 1px, transparent 1px 2px);
`;
const HSep = styled.span`
  width: 14px;
  height: 1px;
  margin: 1px 0;
  flex: none;
  background: #b4bac3;
`;
const Canvas = styled.section`
  position: relative;
  flex: 1;
  min-width: 0;
  overflow: hidden;
  background: #212830;
`;
const Drawing = styled.svg`
  position: absolute;
  inset: 0;
  width: 100%;
  height: 100%;
  fill: none;
  pointer-events: none;
`;
const PointText = styled.text`
  font-family: Roboto, sans-serif;
  font-weight: 300;
  font-size: 13px;
  fill: #1fb030;
  white-space: pre;
`;
const ViewLabel = styled.button`
  ${bare}
  position: absolute;
  left: 2px;
  top: 4px;
`;
const NavBar = styled.div`
  position: absolute;
  top: 3px;
  right: 2px;
  width: 22px;
  height: 163px;
  padding: 10px 0 8px;
  display: flex;
  flex-direction: column;
  align-items: center;
  justify-content: space-between;
  background: #545b5f;
  border: 1px solid #63696d;
  border-radius: 2px;
  color: #42494e;
  & svg { stroke: #42494e; }
`;
const Command = styled.div`
  position: absolute;
  left: 219px;
  right: 218px;
  bottom: 0;
`;
const History = styled.div`
  display: flex;
  flex-direction: column;
  align-items: flex-start;
  gap: 2px;
  margin-left: 42px;
  font-family: "DejaVu Sans Mono", monospace;
`;
const HistLine = styled.p`
  margin: 0;
  padding: 0 1px;
  line-height: 12px;
  background: #5a5e60;
  color: #e2e4e5;
  white-space: nowrap;
`;
const CmdRow = styled.div`
  display: flex;
  align-items: center;
  height: 18px;
  background: #2b333f;
`;
const CmdBox = styled.label`
  flex: 1;
  display: flex;
  align-items: center;
  height: 17px;
  padding: 0 4px 0 2px;
  gap: 1px;
  background: #fff;
  color: #3a3f45;
`;
const CmdInput = styled.input`
  flex: 1;
  min-width: 0;
  margin-left: 4px;
  border: 0;
  padding: 0;
  background: none;
  color: #111;
  font-family: "DejaVu Sans Mono", monospace;
  font-weight: 700;
`;
const UpCaret = styled.svg`
  width: 5px;
  height: 3px;
  fill: #3a3f45;
`;
const LayoutTabs = styled.nav`
  display: flex;
  height: 15px;
  padding-left: 8px;
  gap: 3px;
  background: #222a33;
`;
const LayoutTab = styled.button<{ $on?: boolean; $w: number }>`
  ${bare}
  width: ${(p) => p.$w}px;
  height: 14px;
  border-radius: 0 0 6px 6px;
  background: ${(p) => (p.$on ? "#3a4353" : "#2b333f")};
  color: ${(p) => (p.$on ? "#fff" : "#b3b9c1")};
  font-weight: ${(p) => (p.$on ? 700 : 400)};
`;
const Status = styled.footer`
  display: flex;
  justify-content: flex-end;
  height: 22px;
  padding: 1px 3px 2px 0;
  background: #222a33;
  border-bottom: 3px solid #3e4557;
`;
const StatusInner = styled.div`
  display: flex;
  align-items: center;
  background: #333c4a;
`;
const StatusText = styled.button<{ $w: number }>`
  ${bare}
  width: ${(p) => p.$w}px;
  height: 16px;
`;
const Div = styled.span`
  width: 2px;
  height: 16px;
  background: #222a33;
`;

/* ---------- drawing content ---------- */

const points = [
  { id: "109", code: "EPT8  B", x: 169, y: 252, tx: 180 },
  { id: "111", code: "EPT8", x: 575, y: 252, tx: 586 },
  { id: "113", code: "EPT8", x: 1079, y: 252, tx: 1090 },
  { id: "108", code: "EPT8  B", x: 169, y: 544, tx: 180 },
  { id: "110", code: "EPT8", x: 583, y: 544, tx: 594 },
  { id: "112", code: "EPT8", x: 1009, y: 544, tx: 1020 },
];
const ticks: [number, number, number, number][] = [
  [285, 334, 20, -11], [293, 340, 20, -11], [302, 346, 20, -11],
  [453, 452, 20, -11], [461, 458, 20, -11], [470, 464, 20, -11],
  [711, 343, 20, -11], [719, 349, 20, -11], [728, 355, 20, -11],
  [880, 457, 20, -11], [888, 463, 20, -11], [897, 469, 20, -11],
  [576, 275, -20, -11], [576, 284, -20, -10], [576, 295, -20, -11],
  [581, 478, -20, -10], [581, 489, -20, -10], [582, 499, -20, -10],
  [1074, 275, -19, -12], [1071, 286, -19, -12], [1068, 297, -19, -12],
  [1026, 474, -19, -12], [1023, 485, -19, -12], [1021, 496, -19, -12],
];

const menus = ["File", "Edit", "View", "Draw", "Inquiry", "Settings", "Points", "Survey", "COGO", "Centerline", "Area/Layout", "Annotate", "Surface", "GIS", "CG-Survey", "Window", "Help"];
const tabs = ["Home", "Annotate", "Insert", "View", "Manage", "Draft", "Points", "Survey", "Centerline", "Area/Layout", "Surface", "File", "Setup", "Help"];

const tools = (list: string[], s = 13, width = 16) =>
  list.map((n) => <Tool key={n} $w={width} aria-label={n}><Icon n={n} s={s} /></Tool>);

export default function App() {
  return (
    <>
      <Global />
      <Frame>
        <Header>
          <AppButton aria-label="Application menu">
            <Svg $s={19} viewBox="0 0 16 16" aria-hidden>
              <path d="M0 15L5 1h5l6 13-4 1-2-4H5l-1 4zM7 8h2.500L8 4z" fill="#b81c27" stroke="none" />
              <path d="M5 1L0 15l4-1 4-10 1-3zM5 9l6-1 1 3H5z" fill="#dd3f48" stroke="none" />
            </Svg>
            <Caret />
          </AppButton>
          <HeaderRows>
            <TitleBar>
              <Tool $w={8} aria-label="Customize quick access"><Caret /></Tool>
              <Title>{"Autodesk AutoCAD 2020    Point_Code_Video_Lines.dwg"}</Title>
              <Tool $w={6} aria-label="Expand search">
                <Svg $s={6} viewBox="0 0 6 6"><path d="M1 0l4 3-4 3z" fill={w} stroke="none" /></Svg>
              </Tool>
              <Search aria-label="Search" placeholder="Type a keyword or phrase" />
              <Tool $w={11} aria-label="Find"><Icon n="binoc" s={10} /></Tool>
              <Tool $w={22} aria-label="Account"><Icon n="user" s={10} /></Tool>
              <UserName>Doug_000</UserName>
              <Tool $w={8} aria-label="Account menu"><Caret /></Tool>
              <Tool $w={21} aria-label="Store"><Icon n="shop" s={10} /></Tool>
              <Tool $w={14} aria-label="Stay connected"><Icon n="a360" s={10} /></Tool>
              <Tool $w={8} aria-label="Connect menu"><Caret /></Tool>
              <HelpTools>
                <Tool $w={18} aria-label="Help"><Icon n="help" s={11} /></Tool>
                <Tool $w={8} aria-label="Help menu"><Caret /></Tool>
              </HelpTools>
              <WindowButtons>
                {tools(["min", "max", "close"], 10, 17)}
              </WindowButtons>
            </TitleBar>
            <MenuRow>
              <MenuBar>{menus.map((m) => <MenuItem key={m}>{m}</MenuItem>)}</MenuBar>
              <Group>{tools(["min", "restore", "close"], 9, 12)}</Group>
            </MenuRow>
          </HeaderRows>
        </Header>
        <RibbonTabs>
          {tabs.map((t, i) => <RibbonTab key={t} $on={i === 0}>{t}</RibbonTab>)}
          <RibbonTab $wide aria-label="Ribbon display"><Group $gap={4}><Icon n="camera" s={9} /><Caret /></Group></RibbonTab>
        </RibbonTabs>

        <Ribbon>
          <Panel>
            <PanelBody>
              <BigBtn n="lineBig" label="Line" w={31} />
              <BigBtn n="polylineBig" label="Polyline" w={30} />
              <BigBtn n="circleBig" label="Circle" w={36} caret />
              <BigBtn n="arcBig" label="Arc" w={30} caret />
              <Stack>
                <RowBtn n="rect" name="Rectangle" caret />
                <RowBtn n="ellipse" name="Ellipse" caret />
                <RowBtn n="hatch" name="Hatch" caret />
              </Stack>
            </PanelBody>
            <Foot label="Draw" />
          </Panel>
          <Panel>
            <PanelBody $pad={4}>
              <Stack $w={50}><RowBtn n="move" label="Move" /><RowBtn n="copy" label="Copy" /><RowBtn n="stretch" label="Stretch" /></Stack>
              <Stack $w={49}><RowBtn n="rotate" label="Rotate" /><RowBtn n="mirror" label="Mirror" /><RowBtn n="scale" label="Scale" /></Stack>
              <Stack $w={53}><RowBtn n="trim" label="Trim" caret /><RowBtn n="fillet" label="Fillet" caret /><RowBtn n="array" label="Array" caret /></Stack>
              <Stack><RowBtn n="erase" name="Erase" /><RowBtn n="explode" name="Explode" /><RowBtn n="offset" name="Offset" /></Stack>
            </PanelBody>
            <Foot label="Modify" />
          </Panel>
          <Panel>
            <PanelBody>
              <BigBtn n="textBig" label="Text" w={33} caret />
              <BigBtn n="dimension" label="Dimension" w={41} />
              <Stack><RowBtn n="linear" label="Linear" caret /><RowBtn n="leader" label="Leader" caret /><RowBtn n="table" label="Table" /></Stack>
            </PanelBody>
            <Foot label="Annotation" />
          </Panel>
          <Panel>
            <PanelBody>
              <BigBtn n="layerProps" label={"Layer\nProperties"} w={44} />
              <Stack>
                <Combo>
                  <Icon n="bulb" s={11} /><Icon n="sun" s={11} /><Icon n="unlock" s={11} /><Swatch $s={10} />
                  <Select aria-label="Layer"><option>0</option></Select><Caret />
                </Combo>
                <IconRow>{["layOff", "layIso", "layFreeze", "layLock"].map((n) => <RowBtn key={n} n={n} name={n} />)}<RowBtn n="makeCurrent" label="Make Current" /></IconRow>
                <IconRow>{["layOn", "layIso", "layThaw", "layUnlock"].map((n) => <RowBtn key={n} n={n} name={n} />)}<RowBtn n="layMatch" label="Match Layer" /></IconRow>
              </Stack>
            </PanelBody>
            <Foot label="Layers" />
          </Panel>
          <Panel>
            <PanelBody>
              <BigBtn n="insert" label="Insert" w={29} caret />
              <Stack><RowBtn n="create" label="Create" /><RowBtn n="editBlk" label="Edit" /><RowBtn n="attrs" label="Edit Attributes" caret /></Stack>
            </PanelBody>
            <Foot label="Block" />
          </Panel>
          <Panel>
            <PanelBody>
              <BigBtn n="match" label={"Match\nProperties"} w={44} />
              <Stack $w={14}><RowBtn n="wheel" name="Color" /><RowBtn n="weight" name="Lineweight" /><RowBtn n="ltype" name="Linetype" /></Stack>
              <Stack>
                <Combo><Swatch $s={12} /><Select aria-label="Object color"><option>ByLayer</option></Select><Caret /></Combo>
                <Combo><Rule /><Select aria-label="Lineweight"><option>ByLayer</option></Select><Caret /></Combo>
                <Combo><Rule /><Select aria-label="Linetype"><option>ByLayer</option></Select><Caret /></Combo>
              </Stack>
            </PanelBody>
            <Foot label="Properties" launcher />
          </Panel>
          <Panel>
            <PanelBody>
              <BigBtn n="group" label="Group" w={28} />
              <Stack><RowBtn n="ungroup" name="Ungroup" /><RowBtn n="groupEdit" name="Group Edit" /><Row $on aria-label="Group Selection"><Icon n="groupSel" /></Row></Stack>
            </PanelBody>
            <Foot label="Groups" />
          </Panel>
          <Panel>
            <PanelBody>
              <BigBtn n="measure" label="Measure" w={48} caret />
              <Stack><RowBtn n="quickSel" name="Quick Select" /><RowBtn n="selAll" name="Select All" /><RowBtn n="calc" name="Calculator" /></Stack>
            </PanelBody>
            <Foot label="Utilities" />
          </Panel>
          <Panel>
            <PanelBody>
              <BigBtn n="paste" label="Paste" w={36} caret />
              <Stack><RowBtn n="cut" name="Cut" /><RowBtn n="copyClip" name="Copy Clip" /></Stack>
            </PanelBody>
            <ClipTitle>Clipboard</ClipTitle>
          </Panel>
        </Ribbon>

        <DocTabs>
          <DocTab $w={86}><TabLabel>Start</TabLabel></DocTab>
          <DocTab $w={83}><TabLabel>Drawing1*</TabLabel><Tool $w={13} aria-label="Close Drawing1"><Icon n="close" s={8} /></Tool></DocTab>
          <DocTab $w={121} $on><TabLabel>Point_Code_Video_Lines*</TabLabel><Tool $w={16} aria-label="Close drawing"><Icon n="close" s={8} /></Tool></DocTab>
          <PlusTab aria-label="New drawing"><Icon n="plus" s={8} /></PlusTab>
        </DocTabs>
        <Bar>
          <Grip $w={6} />
          {tools(["man", "road", "hydro", "globe", "pick", "train", "dozer", "docs", "tank", "pic", "bolt", "hammer", "cart", "truck", "logoR"])}
        </Bar>
        <Bar $line>
          <Grip $w={6} />
          {tools(["newDoc", "open", "save"])}<Sep />
          {tools(["print", "preview", "publish", "dwf"])}<Sep />
          {tools(["cut", "copyClip", "paste", "matchSmall", "blockEd"])}<Sep />
          {tools(["undo"])}<Tool $w={8} aria-label="Undo list"><Caret /></Tool>
          {tools(["redo"])}<Tool $w={8} aria-label="Redo list"><Caret /></Tool><Sep />
          {tools(["hand", "zoomRt", "zoomWin", "zoomPrev"])}<Sep />
          {tools(["propPal", "grid4", "tools", "markup", "sheetset", "calc"])}<Sep />
          {tools(["help"])}<Grip $w={6} />
          {tools(["node1", "node2", "node3", "node4", "node5", "node6", "node7", "node8", "node9", "node10"])}<Sep />
          {tools(["filter"])}<Grip $w={8} />
          {tools(["textStyle"])}
          <LightCombo><Select $center aria-label="Text style"><option>DAA-SIMPLEX</option></Select><Caret /></LightCombo>
          {tools(["dimStyle"])}
          <LightCombo><Select $center aria-label="Dimension style"><option>DAA-CARLSON</option></Select><Caret /></LightCombo>
          {tools(["tableStyle"])}
          <LightCombo><Select aria-label="Table style"><option>Standard</option></Select><Caret /></LightCombo>
          {tools(["leadStyle"])}
          <LightCombo><Icon n="mtext" s={10} /><Select aria-label="Multileader style"><option>DAA-MText</option></Select><Caret /></LightCombo>
          <Grip $w={6} />
          {tools(["layTool"])}
          <LightCombo $grow={78}>
            <Icon n="bulbDeep" s={11} /><Icon n="sunDeep" s={11} /><Icon n="sheetSun" s={11} /><Icon n="unlockDeep" s={11} /><LayerSwatch />
            <Select aria-label="Current layer"><option>0</option></Select>
          </LightCombo>
        </Bar>

        <Main>
          <SideStrip $w={20}>
            <VBar $h={319}>
              <VGrip />
              {tools(["line", "flyout", "polyline", "polygon", "rect", "arc", "circle", "cloud", "spline", "ellipse", "ellArc", "insert", "create", "points", "hatch", "gradient", "region", "table", "textA", "colors"], 12)}
            </VBar>
          </SideStrip>
          <Canvas>
            <NavBar>
              <Svg $s={16} viewBox="0 0 16 16"><path d="M8 1l6 3v7l-6 4-6-4V4zM2 4l6 3 6-3M8 7v8" /></Svg>
              <Svg $s={16} viewBox="0 0 16 16"><circle cx="8" cy="8" r="7" /><circle cx="8" cy="8" r="4" /></Svg>
              <Caret />
              <Svg $s={16} viewBox="0 0 16 16"><path d="M5 15L1 9.500l1-1 2.500 1.500L3 4l1.200-.5L6 8V2h1.300l.6 5.500L9.500 2l1.300.3L10 8l2.300-4 1.100.6L12 10l-1 5z" /></Svg>
              <Svg $s={16} viewBox="0 0 16 16"><path d="M1 1l9 9M12 2L2 13M0 4V1h3M10 1h3v3" /><circle cx="11" cy="11" r="3" /><path d="M13 13l3 3" /></Svg>
              <Caret />
              <Svg $s={16} viewBox="0 0 16 16"><ellipse cx="8" cy="8" rx="7" ry="3" /><ellipse cx="8" cy="8" rx="3" ry="7" /></Svg>
              <Caret />
              <Svg $s={14} viewBox="0 0 16 16"><path d="M1 3h14v11H1zM6 6l5 3-5 3z" /></Svg>
            </NavBar>
            <Drawing viewBox="86 172 1087 511" preserveAspectRatio="xMinYMin slice">
              <g stroke="#a5182a" strokeWidth="1">
                <path d="M169 252L583 544L575 252L1009 544L1079 252L1171 320" />
                {ticks.map(([x, ty, dx, dy]) => <path key={`${x}-${ty}`} d={`M${x} ${ty}l${dx} ${dy}`} />)}
              </g>
              {points.map((p) => (
                <g key={p.id}>
                  <path d={`M${p.x - 4} ${p.y - 4}l8 8M${p.x + 4} ${p.y - 4}l-8 8`} stroke="#1ea32c" />
                  <PointText x={p.tx} y={p.y - 5}>{p.id}</PointText>
                  <PointText x={p.tx} y={p.y + 5}>0.00</PointText>
                  <PointText x={p.tx} y={p.y + 15}>{p.code}</PointText>
                </g>
              ))}
              <g stroke="#c9cdd2">
                <path d="M185.500 621v35M186 655.500h34M182.500 652.500h6v6h-6z" />
                <path d="M187 611l4 4 4-4M191 615v4M223 647l8 8M231 647l-8 8" />
              </g>
              <path d="M200 268v10l2.500-2 1.500 3 1.500-.7-1.500-3h3.500z" fill="#fff" stroke="#222" strokeWidth=".5" />
              <path
                d="M1052 683l-4-6 1-1.500 3 1.500-1-6 1.500-.8 1.500 3.500.3-5h1.700l.5 4.500 1.500-4 1.500.5-.3 4.500 1.700-2.500 1.300.7-1.700 7-1 3.600z"
                fill="#0a0c0f" stroke="#f0f0f0"
              />
            </Drawing>
            <ViewLabel>[−][Top][2D Wireframe]</ViewLabel>
            <Command>
              <History>
                <HistLine>Command:</HistLine>
                <HistLine>Press ESC or ENTER to exit, or right-click to display shortcut menu.</HistLine>
              </History>
              <CmdRow>
                <Grip $w={5} />
                <Tool $w={15} aria-label="Close command line"><Icon n="close" s={8} /></Tool>
                <Tool $w={18} aria-label="Customize"><Icon n="wrenchFull" s={11} /></Tool>
                <CmdBox>
                  <Icon n="handDim" s={11} /><Caret />
                  <CmdInput aria-label="Command" defaultValue="PAN" />
                  <UpCaret viewBox="0 0 6 4"><path d="M0 4h6L3 0z" /></UpCaret>
                </CmdBox>
              </CmdRow>
            </Command>
          </Canvas>
          <SideStrip $w={42} $pad={2}>
            <VCol>
              <VBar $h={104}>
                <VGrip />
                {tools(["orderTop", "orderBack", "orderUp", "orderDown"])}
                <HSep />
                {tools(["textFront", "hatchBack"], 12)}
              </VBar>
              <VBar $h={160}>
                <VGrip />
                {tools(["sheetA", "letterD", "curve", "letterS", "recycle", "blue", "lan", "redGrid", "clipEdit", "rows"], 12)}
              </VBar>
            </VCol>
            <VBar $h={287}>
              <VGrip />
              {tools(["erase", "copy", "mirror", "offset", "array", "move", "rotate", "scale", "stretch", "trim", "extend", "breakAt", "breakG", "join", "chamfer", "fillet", "spline", "explode"], 12)}
            </VBar>
          </SideStrip>
        </Main>

        <LayoutTabs>
          <LayoutTab $w={41} $on>Model</LayoutTab>
          <LayoutTab $w={40}>Layout1</LayoutTab>
          <LayoutTab $w={20} aria-label="New layout"><Icon n="plus" s={8} /></LayoutTab>
        </LayoutTabs>
        <Status>
          <StatusInner>
            <StatusText $w={34}>MODEL</StatusText>
            {tools(["gridS", "snap"], 12, 17)}<Tool $w={10} aria-label="Snap menu"><Caret /></Tool><Div />
            {tools(["infer", "ortho", "polar"], 12, 17)}<Tool $w={9} aria-label="Polar menu"><Caret /></Tool>
            {tools(["iso"], 11, 17)}<Tool $w={10} aria-label="Isometric menu"><Caret /></Tool>
            {tools(["otrack"], 12, 18)}
            <Tool $on aria-label="Object snap"><Icon n="osnap" s={13} /></Tool><Tool $w={10} aria-label="Snap options"><Caret /></Tool><Div />
            <Tool $on $w={16} aria-label="Annotation visibility"><Icon n="anno1" /></Tool>
            {tools(["anno2", "anno3"], 12, 17)}
            <StatusText $w={31}>1" = 10'</StatusText><Tool $w={8} aria-label="Scale menu"><Caret /></Tool><Div />
            {tools(["gear"], 12, 18)}<Tool $w={10} aria-label="Workspace menu"><Caret /></Tool>
            {tools(["plus"], 12, 17)}<Div />
            {tools(["monitor"], 12, 16)}<Tool $w={12} aria-label="Units menu"><Caret /></Tool><Div />
            {tools(["elev"], 12, 17)}
            <StatusText $w={33}>3.5000</StatusText>
            {tools(["isoObj"], 12, 17)}
            {tools(["perf"], 14, 20)}
            {tools(["clean"], 12, 19)}
            {tools(["menu"], 12, 17)}
          </StatusInner>
        </Status>
      </Frame>
    </>
  );
}
